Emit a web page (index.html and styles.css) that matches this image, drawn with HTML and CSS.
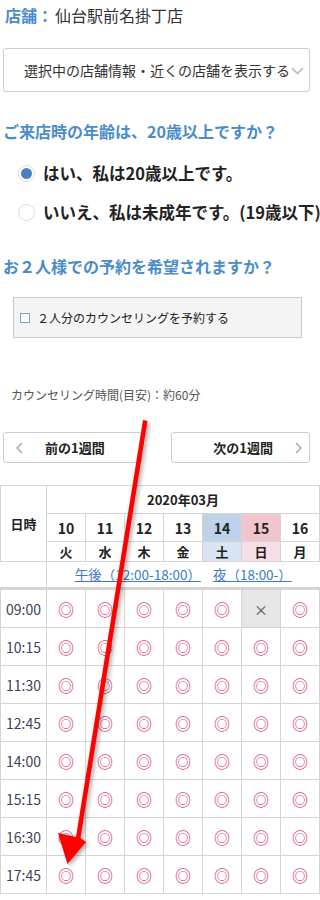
FILE: index.html
```html
<!DOCTYPE html>
<html lang="ja">
<head>
<meta charset="utf-8">
<link rel="stylesheet" href="styles.css">
</head>
<body>
<div class="page">
  <div class="shop"><span class="shop-label">店舗：</span><span class="shop-name">仙台駅前名掛丁店</span></div>
  <div class="select">
    <span class="select-text">選択中の店舗情報・近くの店舗を表示する</span>
    <svg class="select-chev" width="13" height="8" viewBox="0 0 13 8"><path d="M1 1 L6.5 6.5 L12 1" fill="none" stroke="#bbb" stroke-width="1.6"/></svg>
  </div>

  <h2 class="q">ご来店時の年齢は、20歳以上ですか？</h2>
  <div class="radios">
    <div class="radio-row"><span class="radio on"></span><span class="radio-text">はい、私は20歳以上です。</span></div>
    <div class="radio-row"><span class="radio"></span><span class="radio-text">いいえ、私は未成年です。(19歳以下)</span></div>
  </div>

  <h2 class="q q2">お２人様での予約を希望されますか？</h2>
  <div class="check-box"><span class="check"></span><span class="check-text">２人分のカウンセリングを予約する</span></div>

  <p class="duration">カウンセリング時間(目安)：約60分</p>

  <div class="weeks">
    <div class="week-btn prev">
      <svg class="wchev" width="7" height="12" viewBox="0 0 7 12"><path d="M6 1 L1 6 L6 11" fill="none" stroke="#aaa" stroke-width="1.5"/></svg>
      <span>前の1週間</span>
    </div>
    <div class="week-btn next">
      <span>次の1週間</span>
      <svg class="wchev" width="7" height="12" viewBox="0 0 7 12"><path d="M1 1 L6 6 L1 11" fill="none" stroke="#aaa" stroke-width="1.5"/></svg>
    </div>
  </div>

  <table class="cal">
    <colgroup><col class="c0"><col class="cd"><col class="cd"><col class="cd"><col class="cd"><col class="cd"><col class="cd"><col class="cd"></colgroup>
    <tr class="r-month"><th rowspan="3" class="hd">日時</th><th colspan="7">2020年03月</th></tr>
    <tr class="r-date"><th>10</th><th>11</th><th>12</th><th>13</th><th class="sat">14</th><th class="sun">15</th><th>16</th></tr>
    <tr class="r-day"><th>火</th><th>水</th><th>木</th><th>金</th><th class="sat2">土</th><th class="sun2">日</th><th>月</th></tr>
    <tr class="r-link"><th class="lk0"></th><th colspan="7" class="links"><a>午後（12:00-18:00）</a><a>夜（18:00-）</a></th></tr>
    <tr><td class="t">09:00</td><td class="o">◎</td><td class="o">◎</td><td class="o">◎</td><td class="o">◎</td><td class="o">◎</td><td class="x">×</td><td class="o">◎</td></tr>
    <tr><td class="t">10:15</td><td class="o">◎</td><td class="o">◎</td><td class="o">◎</td><td class="o">◎</td><td class="o">◎</td><td class="o">◎</td><td class="o">◎</td></tr>
    <tr><td class="t">11:30</td><td class="o">◎</td><td class="o">◎</td><td class="o">◎</td><td class="o">◎</td><td class="o">◎</td><td class="o">◎</td><td class="o">◎</td></tr>
    <tr><td class="t">12:45</td><td class="o">◎</td><td class="o">◎</td><td class="o">◎</td><td class="o">◎</td><td class="o">◎</td><td class="o">◎</td><td class="o">◎</td></tr>
    <tr><td class="t">14:00</td><td class="o">◎</td><td class="o">◎</td><td class="o">◎</td><td class="o">◎</td><td class="o">◎</td><td class="o">◎</td><td class="o">◎</td></tr>
    <tr><td class="t">15:15</td><td class="o">◎</td><td class="o">◎</td><td class="o">◎</td><td class="o">◎</td><td class="o">◎</td><td class="o">◎</td><td class="o">◎</td></tr>
    <tr><td class="t">16:30</td><td class="o">◎</td><td class="o">◎</td><td class="o">◎</td><td class="o">◎</td><td class="o">◎</td><td class="o">◎</td><td class="o">◎</td></tr>
    <tr><td class="t">17:45</td><td class="o">◎</td><td class="o">◎</td><td class="o">◎</td><td class="o">◎</td><td class="o">◎</td><td class="o">◎</td><td class="o">◎</td></tr>
  </table>

  <svg class="arrow" width="320" height="900" viewBox="0 0 320 900">
    <polygon points="143,420 147.5,421 80.5,838 86,842 67.5,864 58,833 76,837" fill="#ff0000"/>
  </svg>
</div>
</body>
</html>
```

FILE: styles.css
```css
html, body {
  margin: 0;
  padding: 0;
  background: #fff;
}
body {
  font-family: "Noto Sans CJK JP", "Noto Sans", sans-serif;
  color: #333;
  width: 320px;
  overflow: hidden;
}
.page {
  position: relative;
  width: 320px;
  height: 900px;
  overflow: hidden;
}
.shop {
  padding: 3px 0 0 5px;
  font-size: 16px;
  line-height: 24px;
  height: 40px;
}
.shop-label {
  color: #4a8ccb;
  font-weight: bold;
}
.shop-name {
  color: #333;
  margin-left: 2px;
}
.select {
  margin: 5px 10px 0 3px;
  height: 42px;
  border: 1px solid #ccc;
  border-radius: 3px;
  display: flex;
  align-items: center;
  padding-left: 20px;
  font-size: 14px;
  color: #333;
  white-space: nowrap;
}
.select-chev {
  margin-left: 1px;
  margin-top: 2px;
}
.q {
  margin: 0;
  font-size: 16px;
  font-weight: bold;
  color: #4a8ccb;
  padding-left: 3px;
  line-height: 24px;
  margin-top: 27px;
}
.radios {
  margin-top: 20px;
  padding-left: 18px;
}
.radio-row {
  display: flex;
  align-items: center;
  height: 20px;
  white-space: nowrap;
  margin-bottom: 19px;
}
.radio {
  width: 15px;
  height: 15px;
  border: 1px solid #ddd;
  border-radius: 50%;
  box-sizing: content-box;
  flex: none;
  position: relative;
  background: #fff;
}
.radio.on::after {
  content: "";
  position: absolute;
  left: 2px;
  top: 2px;
  width: 11px;
  height: 11px;
  border-radius: 50%;
  background: #4b80bf;
}
.radio-text {
  margin-left: 8px;
  font-size: 16.5px;
  font-weight: bold;
  color: #222;
}
.q2 {
  margin-top: 32px;
}
.check-box {
  margin: 19px 18px 0 13px;
  height: 39px;
  background: #f4f4f4;
  border: 1px solid #c8c8c8;
  display: flex;
  align-items: center;
  padding-left: 6px;
}
.check {
  width: 8px;
  height: 8px;
  border: 1px solid #7a9fcf;
  background: #fff;
  flex: none;
}
.check-text {
  margin-left: 7px;
  font-size: 12px;
  color: #222;
}
.duration {
  margin: 48px 0 0 11px;
  font-size: 12px;
  color: #555;
  line-height: 18px;
}
.weeks {
  display: flex;
  justify-content: space-between;
  margin: 28px 10px 0 3px;
}
.week-btn {
  width: 139px;
  height: 31px;
  box-sizing: border-box;
  border: 1px solid #ccc;
  border-radius: 3px;
  display: flex;
  align-items: center;
  font-size: 13px;
  font-weight: bold;
  color: #222;
}
.week-btn.prev { padding-left: 12px; }
.week-btn.prev span { margin-left: 22px; }
.week-btn.next { justify-content: flex-end; padding-right: 7px; }
.week-btn.next span { margin-right: 22px; }

.cal {
  margin-top: 22px;
  border-collapse: collapse;
  width: 320px;
  table-layout: fixed;
  font-size: 13px;
  line-height: 1;
}
.c0 { width: 46px; }
.cd { width: 39px; }
.cal th, .cal td {
  border: 1px solid #d4d4d4;
  padding: 0;
  text-align: center;
  font-weight: normal;
  color: #222;
}
.cal th { font-weight: bold; }
.r-month th { height: 27px; font-size: 13px; }
.r-date th { height: 27px; font-size: 14px; }
.r-day th { height: 19px; font-size: 13px; }
.cal tr.r-link th {
  height: 25px;
  border-bottom: 3px solid #d4d4d4;
  border-left: none;
  border-right: none;
}
.cal tr.r-link th.lk0 { border-right: 1px solid #d4d4d4; }
.cal tr.r-link th.links { font-weight: normal; }
.links a {
  color: #3b7bbf;
  text-decoration: underline;
  font-size: 13.5px;
  margin: 0 6px;
}
.sat { background: #bfd2e9; }
.sun { background: #f2c5cd; }
.sat2 { background: #d6e4f3; }
.sun2 { background: #f7dde6; }
.cal td { height: 37px; }
.cal td.t { color: #3f3f5a; font-size: 14px; }
.cal td.o { color: #d8457a; font-size: 16px; font-weight: bold; }
.cal td.x { background: #e6e6e6; color: #555; font-size: 14px; }
.arrow {
  position: absolute;
  left: 0;
  top: 0;
  pointer-events: none;
  filter: drop-shadow(2px 2px 2px rgba(0,0,0,0.35));
}
```
